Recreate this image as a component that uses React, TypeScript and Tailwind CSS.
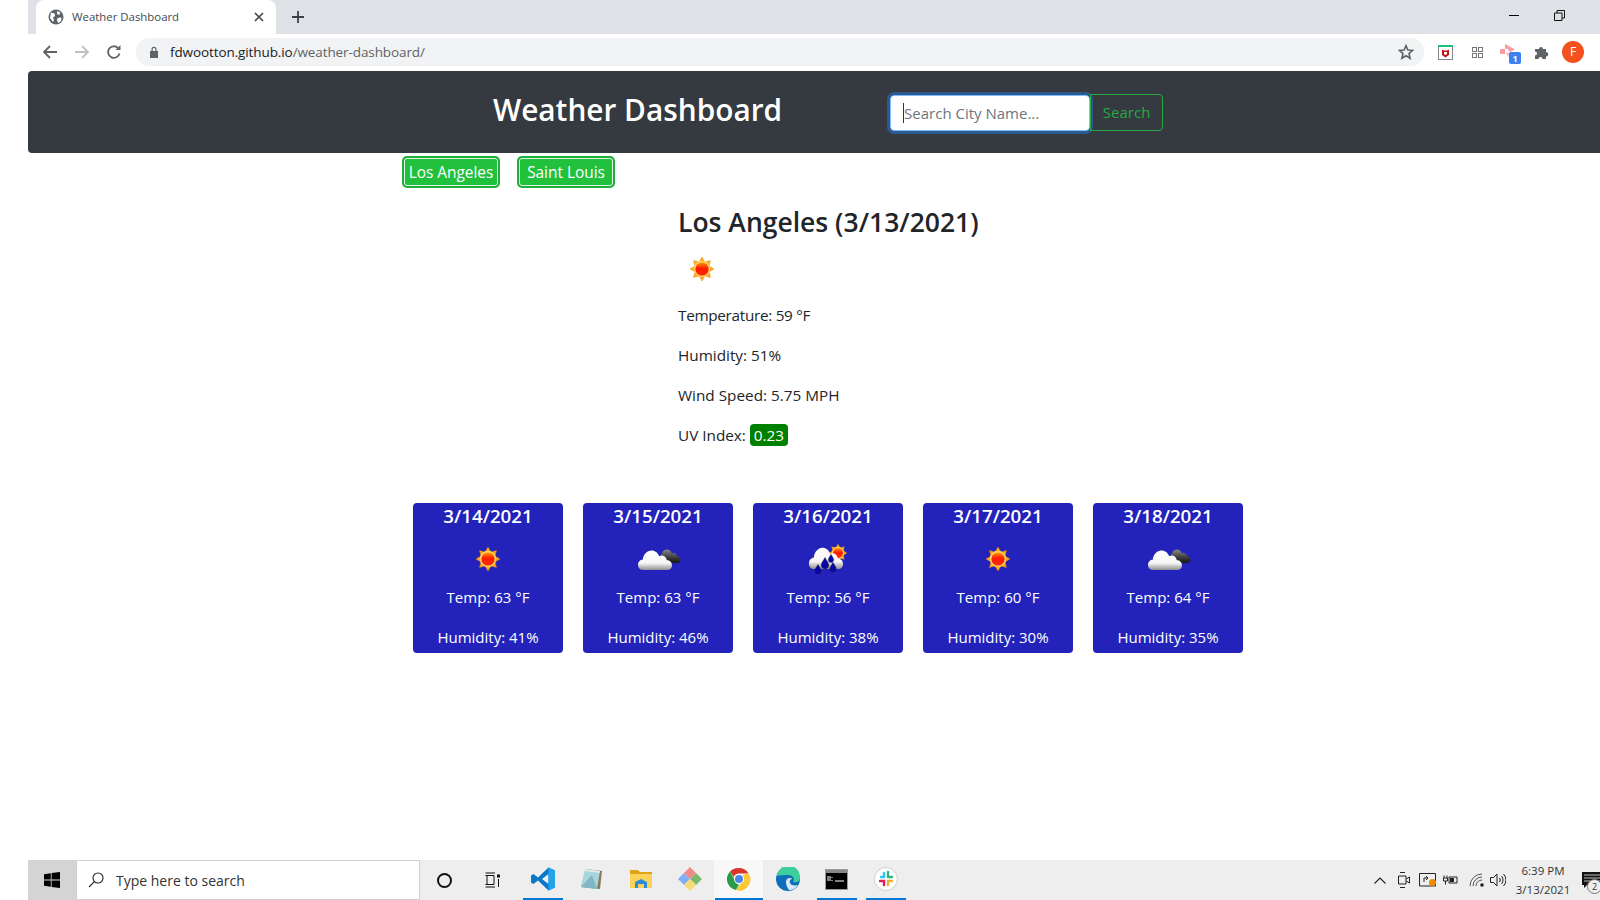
const forecast = [
  { date: "3/14/2021", icon: "sun", temp: 63, humidity: 41 },
  { date: "3/15/2021", icon: "cloud", temp: 63, humidity: 46 },
  { date: "3/16/2021", icon: "rain", temp: 56, humidity: 38 },
  { date: "3/17/2021", icon: "sun", temp: 60, humidity: 30 },
  { date: "3/18/2021", icon: "cloud", temp: 64, humidity: 35 },
];

const Defs = () => (
  <svg width="0" height="0" className="absolute">
    <defs>
      <linearGradient id="sunCore" x1="0" y1="0" x2="0" y2="1">
        <stop offset="0" stopColor="#ff9a00" />
        <stop offset="0.45" stopColor="#ff1a00" />
        <stop offset="1" stopColor="#ff2a00" />
      </linearGradient>
      <linearGradient id="whiteCloud" x1="0" y1="0" x2="0" y2="1">
        <stop offset="0" stopColor="#ffffff" />
        <stop offset="0.65" stopColor="#f6f6f6" />
        <stop offset="1" stopColor="#8f8f8f" />
      </linearGradient>
      <linearGradient id="darkCloud" x1="0" y1="0" x2="0" y2="1">
        <stop offset="0" stopColor="#8a8a8a" />
        <stop offset="0.6" stopColor="#3b3b3b" />
        <stop offset="1" stopColor="#151515" />
      </linearGradient>
    </defs>
  </svg>
);

const SunShape = ({ cx, cy, scale = 1 }: { cx: number; cy: number; scale?: number }) => (
  <g transform={`translate(${cx} ${cy}) scale(${scale})`}>
    {[0, 45, 90, 135, 180, 225, 270, 315].map((a) => (
      <path key={a} d="M-3.2 -6.5L0 -12L3.2 -6.5Z" fill="#ffa51c" stroke="#e58a10" strokeWidth="0.4" transform={`rotate(${a})`} />
    ))}
    <circle r="8.2" fill="#ffd060" />
    <circle r="6.6" fill="url(#sunCore)" />
  </g>
);

const CloudShape = ({ fill, x, y, s, sy }: { fill: string; x: number; y: number; s: number; sy: number }) => (
  <path
    transform={`translate(${x} ${y}) scale(${s} ${sy})`}
    d="M5 20C1.5 20 0 17.5 0 15.5C0 12.8 2.2 11 4.8 11C5.2 6.5 9 3 13.5 3C17 3 20 5 21.2 8C22.2 7.4 23.4 7.2 24.6 7.4C27 7.8 28.6 9.6 28.8 11.6C31.8 11.6 34 13.4 34 15.9C34 18.4 32 20 29.5 20Z"
    fill={fill}
  />
);

const WeatherIcon = ({ type }: { type: string }) => (
  <svg width="50" height="50" viewBox="0 0 50 50" className="shrink-0">
    {type === "sun" && <SunShape cx={25} cy={25} />}
    {type === "cloud" && (
      <>
        <CloudShape fill="url(#darkCloud)" x={25} y={13} s={0.66} sy={0.8} />
        <CloudShape fill="url(#whiteCloud)" x={5} y={13} s={1} sy={1.15} />
      </>
    )}
    {type === "rain" && (
      <>
        <SunShape cx={35} cy={19} scale={0.75} />
        <CloudShape fill="url(#whiteCloud)" x={6} y={10} s={1} sy={1.25} />
        {[[15, 36, 1.2], [22, 30, 1.4], [28, 25, 1], [30, 34, 1.2]].map(([x, y, s]) => (
          <path
            key={`${x}-${y}`}
            transform={`translate(${x} ${y}) scale(${s})`}
            d="M0 -4.5C1.2 -2.2 2.6 -1 2.6 0.8A2.6 2.6 0 0 1 -2.6 0.8C-2.6 -1 -1.2 -2.2 0 -4.5Z"
            fill="#0808a8"
            stroke="#1a1a50"
            strokeWidth="0.5"
          />
        ))}
      </>
    )}
  </svg>
);

const TabStrip = () => (
  <div className="flex h-[34px] items-end bg-[#dee1e6] pl-2 shrink-0">
    <div className="flex h-[34px] w-[240px] items-center rounded-t-lg bg-white pl-3 pr-[12px]">
      <svg width="16" height="16" viewBox="0 0 16 16">
        <circle cx="8" cy="8" r="7.5" fill="#5f6368" />
        <path d="M3 3.5L6.5 4.5L7 7L5 8.5L6 11L5 13L2 9ZM9 2L12.5 3.5L11 6L9 5ZM9.5 9L13.5 8.5L13 12L10.5 14L9 12Z" fill="#fff" />
      </svg>
      <span className="ml-2 text-[11.4px] text-[#45494e]">Weather Dashboard</span>
      <svg width="10" height="10" viewBox="0 0 10 10" className="ml-auto" stroke="#45494e" strokeWidth="1.7">
        <path d="M1 1L9 9M9 1L1 9" />
      </svg>
    </div>
    <svg width="14" height="14" viewBox="0 0 14 14" className="ml-[15px] mb-[10px]" stroke="#3c4043" strokeWidth="1.8">
      <path d="M7 1V13M1 7H13" />
    </svg>
    <div className="ml-auto mb-[13px] flex items-center gap-[35px] pr-[35px]">
      <div className="h-[1px] w-[10px] bg-black" />
      <svg width="11" height="11" viewBox="0 0 11 11" fill="none" stroke="#111" strokeWidth="1">
        <path d="M0.5 3H8V10.5H0.5ZM3 3V0.5H10.5V8H8" />
      </svg>
    </div>
  </div>
);

const Toolbar = () => (
  <div className="flex h-[36px] items-center bg-white shrink-0">
    <svg width="16" height="16" viewBox="0 0 16 16" className="ml-[14px]" fill="none" stroke="#5f6368" strokeWidth="1.8">
      <path d="M15 8H2M8 2L2 8L8 14" />
    </svg>
    <svg width="16" height="16" viewBox="0 0 16 16" className="ml-[16px]" fill="none" stroke="#bdc1c6" strokeWidth="1.8">
      <path d="M1 8H14M8 2L14 8L8 14" />
    </svg>
    <svg width="16" height="16" viewBox="0 0 16 16" className="ml-[16px]" fill="none" stroke="#5f6368" strokeWidth="1.8">
      <path d="M13.5 9.5A5.8 5.8 0 1 1 12 4" />
      <path d="M14.5 1V6H9.5Z" fill="#5f6368" stroke="none" />
    </svg>
    <div className="ml-[14px] flex h-[28px] w-[1288px] items-center rounded-full bg-[#f1f3f4] pl-[13px] pr-[10px]">
      <svg width="10" height="12" viewBox="0 0 10 12" fill="#5f6368">
        <path d="M1 5H9V12H1ZM2.5 5V3.2A2.5 2.5 0 0 1 7.5 3.2V5H6.3V3.2A1.3 1.3 0 0 0 3.7 3.2V5Z" />
      </svg>
      <span className="ml-[11px] text-[13.5px] tracking-[-0.1px] text-[#202124]">
        fdwootton.github.io<span className="text-[#5f6368]">/weather-dashboard/</span>
      </span>
      <svg width="16" height="16" viewBox="0 0 24 24" className="ml-auto" fill="none" stroke="#5f6368" strokeWidth="2.4">
        <path d="M12 2.5L14.8 9L22 9.6L16.5 14.3L18.2 21.4L12 17.6L5.8 21.4L7.5 14.3L2 9.6L9.2 9Z" />
      </svg>
    </div>
    <div className="ml-[14px] flex h-[15px] w-[15px] flex-col border border-[#80868b] border-t-0">
      <div className="-mx-px h-[2px] bg-[#1bc47d]" />
      <svg width="13" height="12" viewBox="0 0 13 12">
        <path d="M3 2.5L5 3.5H8L10 2.5V8L6.5 10.5L3 8Z" fill="#c01818" />
        <path d="M5 5H8V7L6.5 8L5 7Z" fill="#fff" />
      </svg>
    </div>
    <div className="ml-[19px] grid h-[11px] w-[11px] grid-cols-2 gap-[1px]">
      <div className="border border-[#777]" />
      <div className="border border-[#777]" />
      <div className="border border-[#777]" />
      <div className="border border-[#777]" />
    </div>
    <div className="relative ml-[15px] h-[24px] w-[24px]">
      <svg width="18" height="16" viewBox="0 0 18 16" className="absolute left-[1px] top-[3px]">
        <path d="M1 6H6V11H1Z" fill="#ff9aa2" />
        <path d="M6 1L16 6.5L11 9L8 5.5L6 6Z" fill="#ff9aa2" />
        <path d="M7 10L11 9.5L9 14Z" fill="#ffb8bd" />
      </svg>
      <div className="absolute left-[11px] top-[12px] flex h-[12px] w-[12px] items-center justify-center rounded-[2px] bg-[#3b82f0] text-[9px] font-bold leading-none text-white">
        1
      </div>
    </div>
    <svg width="16" height="16" viewBox="0 0 16 16" className="ml-[12px]" fill="#5f6368">
      <path d="M1 5H5A2 2 0 0 1 9 5H12V8A2 2 0 0 1 12 12.5V15H8.5A2 2 0 0 0 4.5 15H1V11.5A2 2 0 0 0 1 7.5Z" />
    </svg>
    <div className="ml-[12px] flex h-[22px] w-[22px] items-center justify-center rounded-full bg-[#f4511e] text-[12px] text-white">
      F
    </div>
  </div>
);

const Navbar = () => (
  <div className="mt-px flex h-[82px] shrink-0 items-center rounded-l-[4px] bg-[#343a40] pl-[465px]">
    <h1 className="mb-[4px] text-[29.8px] font-semibold leading-none text-white">Weather Dashboard</h1>
    <div className="ml-[108px] mt-[1px] flex items-center">
      <div className="flex h-[36px] w-[200px] items-center rounded-[4px] border border-[#80bdff] bg-white pl-[12px] outline-3 outline-[#2c5a8f]">
        <div className="h-[20px] w-px bg-[#333]" />
        <span className="pt-px text-[15px] text-[#6c757d]">Search City Name...</span>
      </div>
      <button className="h-[37px] w-[73px] rounded-r-[4px] border border-[#28a745] text-[15px] text-[#28a745]">
        Search
      </button>
    </div>
  </div>
);

const CityButton = ({ children }: { children: React.ReactNode }) => (
  <button className="flex h-[32px] w-[98px] items-center justify-center rounded-[5px] border-[2px] border-[#1fae3a] bg-[#21c13e] pt-px text-[15.4px] text-white shadow-[inset_0_0_0_1px_#dff5e3]">
    {children}
  </button>
);

const Main = () => (
  <main className="flex-1 overflow-hidden bg-white">
    <div className="mt-[3px] flex gap-[17px] pl-[374px]">
      <CityButton>Los Angeles</CityButton>
      <CityButton>Saint Louis</CityButton>
    </div>
    <section className="ml-[650px] mt-[17px] text-[#212529]">
      <h2 className="text-[26.5px] font-semibold leading-[34px]">Los Angeles (3/13/2021)</h2>
      <div className="mt-[5px] mb-[9px] -ml-px">
        <WeatherIcon type="sun" />
      </div>
      <p className="mb-4 text-[15.3px] leading-6 tracking-[-0.3px]">Temperature: 59 °F</p>
      <p className="mb-4 text-[15.3px] leading-6">Humidity: 51%</p>
      <p className="mb-4 text-[15.3px] leading-6">Wind Speed: 5.75 MPH</p>
      <p className="text-[15.3px] leading-6">
        UV Index: <span className="rounded-[4px] bg-[#008000] px-[4px] py-[1px] text-white">0.23</span>
      </p>
    </section>
    <div className="ml-[385px] mt-[56px] flex gap-5">
      {forecast.map((day) => (
        <div key={day.date} className="flex h-[150px] w-[150px] flex-col items-center rounded-[4px] bg-[#2323bb] text-white">
          <h5 className="mt-px text-[18.7px] font-semibold leading-6">{day.date}</h5>
          <div className="mt-[6px]">
            <WeatherIcon type={day.icon} />
          </div>
          <p className="mt-px text-[15px] leading-6">Temp: {day.temp} °F</p>
          <p className="mt-4 text-[15px] leading-6">Humidity: {day.humidity}%</p>
        </div>
      ))}
    </div>
  </main>
);

const TaskIcon = ({ children, active, tile }: { children: React.ReactNode; active?: boolean; tile?: boolean }) => (
  <div className={`flex h-10 w-[49px] justify-center ${tile ? "bg-[#f8f8f8]" : ""}`}>
    <div className={`flex h-10 items-center justify-center border-b-2 ${tile ? "w-[48px]" : "w-[40px]"} ${active ? "border-[#0078d7]" : "border-transparent"}`}>
      {children}
    </div>
  </div>
);

const Taskbar = () => (
  <footer className="flex h-10 shrink-0 items-center bg-[#eeeeee]">
    <div className="flex h-10 w-[48px] items-center justify-center bg-[#d4d4d4]">
      <svg width="16" height="16" viewBox="0 0 16 16" fill="#000">
        <path d="M0 2.2L6.8 1.2V7.5H0ZM7.6 1.1L16 0V7.5H7.6ZM0 8.4H6.8V14.8L0 13.8ZM7.6 8.4H16V16L7.6 14.9Z" />
      </svg>
    </div>
    <div className="flex h-10 w-[344px] items-center border border-[#d0d0d0] bg-white pl-[11px]">
      <svg width="16" height="16" viewBox="0 0 16 16" fill="none" stroke="#222" strokeWidth="1.1">
        <circle cx="10" cy="6" r="5" />
        <path d="M6.4 9.6L1 15" />
      </svg>
      <span className="ml-[12px] text-[14px] text-[#333]">Type here to search</span>
    </div>
    <div className="flex h-10 w-[48px] items-center justify-center">
      <div className="h-[15px] w-[15px] rounded-full border-2 border-[#111]" />
    </div>
    <div className="flex h-10 w-[50px] items-center justify-center">
      <svg width="16" height="16" viewBox="0 0 16 16" fill="none" stroke="#111" strokeWidth="1">
        <path d="M0.5 1H10M0.5 15H10M2 3.5H9V12.5H2ZM0.5 3.5H3M0.5 12.5H3M13.5 7V15" />
        <rect x="12" y="2.5" width="3" height="3" fill="#111" stroke="none" />
      </svg>
    </div>
    <TaskIcon active>
      <svg width="24" height="24" viewBox="0 0 24 24">
        <path d="M17.5 0.5L24 3.5V20.5L17.5 23.5L7 13.5L2.5 17L0 15.5V8.5L2.5 7L7 10.5ZM17.5 7L11 12L17.5 17Z" fill="#0a78c8" fillRule="evenodd" />
        <path d="M17.5 0.5L24 3.5V20.5L17.5 23.5V17V7Z" fill="#22a3ea" />
      </svg>
    </TaskIcon>
    <TaskIcon>
      <svg width="24" height="24" viewBox="0 0 24 24">
        <path d="M6 2L22 4L20 22L1 20Z" fill="#8a7a5c" />
        <path d="M5 2L20 4L17 22L1 20Z" fill="#a9d4dc" />
        <path d="M5 2L20 4L19.5 6L4.5 4Z" fill="#e4e8e8" />
        <path d="M3 18L12 8L17 22L1 20Z" fill="#7eb6c4" />
      </svg>
    </TaskIcon>
    <TaskIcon>
      <svg width="24" height="24" viewBox="0 0 24 24">
        <path d="M1 3H9L11 5H23V8H1Z" fill="#e0a31a" />
        <path d="M1 7H23V21H1Z" fill="#fbd35b" />
        <path d="M6 15L12 12L18 15V21H15V17H9V21H6Z" fill="#2f88d8" />
      </svg>
    </TaskIcon>
    <TaskIcon>
      <svg width="24" height="24" viewBox="0 0 24 24">
        <path d="M0 12L6 6L12 12L6 18Z" fill="#7fb0f5" />
        <path d="M6 6L12 0L18 6L12 12Z" fill="#f08a8a" />
        <path d="M12 12L18 6L24 12L18 18Z" fill="#7cb870" />
        <path d="M6 18L12 12L18 18L12 24Z" fill="#f5dc78" />
      </svg>
    </TaskIcon>
    <TaskIcon active tile>
      <svg width="24" height="24" viewBox="0 0 24 24">
        <path d="M12 1A11 11 0 0 1 21.5 6.5H12A5.5 5.5 0 0 0 6.8 10L3 4.6A11 11 0 0 1 12 1Z" fill="#d8362a" />
        <path d="M3 4.6L7.8 12.9A5.5 5.5 0 0 0 12 17.5L9 23A11 11 0 0 1 3 4.6Z" fill="#2a9c48" />
        <path d="M21.5 6.5A11 11 0 0 1 9 23L15 14.5A5.5 5.5 0 0 0 15.5 8Z" fill="#fcc934" />
        <circle cx="12" cy="12" r="5" fill="#fff" />
        <circle cx="12" cy="12" r="4" fill="#4a86e8" />
      </svg>
    </TaskIcon>
    <TaskIcon>
      <svg width="24" height="24" viewBox="0 0 24 24">
        <circle cx="12" cy="12" r="12" fill="#0c6fb8" />
        <path d="M1 9A11.5 11.5 0 0 1 24 11C24 14.5 20 16 17 15C19 13 18 8.5 12.5 8C7 8 3 8 1 9Z" fill="#3fcf9f" />
        <path d="M10 15C10 11 14 10 16.5 12C15 12 13 13 14 16C15.5 19 20 19 22 17.5C20 21.5 16 23.5 13 23C11 20 10 18 10 15Z" fill="#ffffff" opacity="0.85" />
      </svg>
    </TaskIcon>
    <TaskIcon active>
      <div className="h-[21px] w-[23px] border border-[#9a9a9a] bg-black">
        <div className="h-[3px] bg-[#888]" />
        <svg width="21" height="16" viewBox="0 0 21 16" fill="none" stroke="#fff" strokeWidth="1">
          <path d="M2 3V8M4 3V8M6 4V5M6 7V8M9 8H18" />
        </svg>
      </div>
    </TaskIcon>
    <TaskIcon active>
      <svg width="24" height="24" viewBox="0 0 24 24" fill="none" strokeLinecap="round" strokeWidth="2.4">
        <circle cx="12" cy="12" r="11.5" fill="#fff" stroke="#cfcfcf" strokeWidth="1" />
        <path d="M10 6V10H7" stroke="#36c5f0" />
        <path d="M14 5V10M14 10H18" stroke="#2eb67d" />
        <path d="M6 14H10V18" stroke="#e01e5a" />
        <path d="M14 14V18M14 14H18" stroke="#ecb22e" />
      </svg>
    </TaskIcon>
    <div className="ml-auto flex h-10 items-center">
      <svg width="12" height="7" viewBox="0 0 12 7" fill="none" stroke="#222" strokeWidth="1.1">
        <path d="M0.5 6.5L6 1L11.5 6.5" />
      </svg>
      <svg width="12" height="16" viewBox="0 0 12 16" className="ml-[12px]" fill="none" stroke="#222" strokeWidth="1">
        <path d="M2 0.5H7M2 15.5H7M0.5 4H8V12H0.5ZM8 7L11.5 5V11L8 9" />
      </svg>
      <svg width="17" height="15" viewBox="0 0 17 15" className="ml-[9px]" fill="none" stroke="#222" strokeWidth="1">
        <path d="M0.5 0.5H16.5V13H0.5ZM5 9V5H9M7 3L9 5L7 7" />
      </svg>
      <div className="relative">
        <div className="absolute -left-[7px] top-[-1px] h-[7px] w-[7px] rounded-full bg-[#f08a00]" />
      </div>
      <svg width="15" height="10" viewBox="0 0 15 10" className="ml-[7px]" fill="none" stroke="#222" strokeWidth="1">
        <path d="M1 0.5V3M4 0.5V3M0.5 3H4.5V6H0.5ZM2.5 6V9.5M6 2H14V8H6Z" />
        <rect x="7" y="3" width="4" height="4" fill="#222" stroke="none" />
      </svg>
      <svg width="16" height="14" viewBox="0 0 16 14" className="ml-[11px]" fill="none" stroke="#444" strokeWidth="0.9">
        <path d="M1 13A12 12 0 0 1 13 1M4 13A9 9 0 0 1 13 4M7 13A6 6 0 0 1 13 7" />
        <circle cx="13" cy="12" r="1.8" fill="#222" stroke="none" />
      </svg>
      <svg width="16" height="14" viewBox="0 0 16 14" className="ml-[5px]" fill="none" stroke="#222" strokeWidth="1">
        <path d="M0.5 4.5H3.5L7 1V13L3.5 9.5H0.5ZM9.5 5A3 3 0 0 1 9.5 9M11.5 3A6 6 0 0 1 11.5 11M13.5 1A8.5 8.5 0 0 1 13.5 13" />
      </svg>
      <div className="ml-[9px] flex w-[56px] flex-col items-center text-[11.5px] leading-[19px] text-[#333]">
        <span>6:39 PM</span>
        <span>3/13/2021</span>
      </div>
      <div className="relative ml-[11px] h-10 w-[18px] overflow-hidden">
        <svg width="18" height="16" viewBox="0 0 18 16" className="absolute left-0 top-[12px]" fill="#111">
          <path d="M0 0H18V13H5L2 16V13H0Z" />
          <path d="M2 3H18M2 6H18M2 9H18" stroke="#eee" strokeWidth="0.8" />
        </svg>
        <div className="absolute left-[5px] top-[19px] h-[15px] w-[15px] rounded-full border border-[#777] bg-[#eee] text-center text-[9px] leading-[13px] text-[#333]">
          2
        </div>
      </div>
    </div>
  </footer>
);

export default function App() {
  return (
    <div className="flex h-screen w-full overflow-hidden bg-white font-['Open_Sans',sans-serif]">
      <Defs />
      <div className="w-[28px] shrink-0" />
      <div className="flex min-w-0 flex-1 flex-col">
        <TabStrip />
        <Toolbar />
        <Navbar />
        <Main />
        <Taskbar />
      </div>
    </div>
  );
}
